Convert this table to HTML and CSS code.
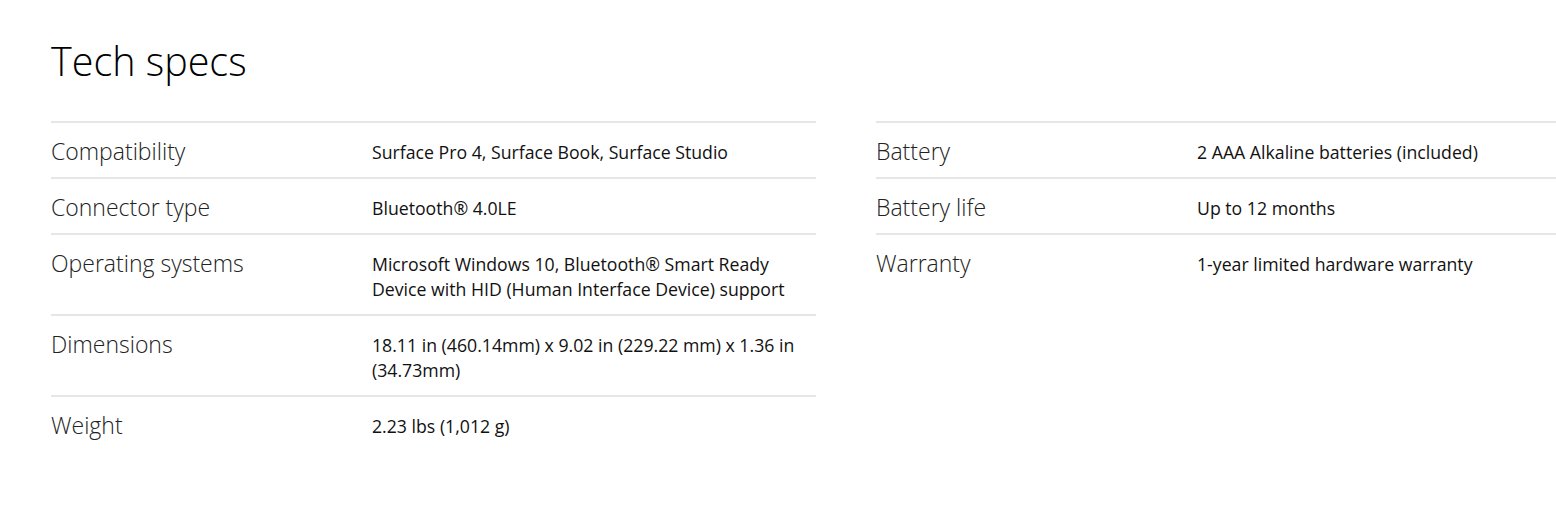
FILE: index.html
```html
<!DOCTYPE html>
<html lang="en">
<head>
<meta charset="utf-8">
<title>Tech specs</title>
<link rel="stylesheet" href="styles.css">
</head>
<body>
<main class="page">
  <h1 class="title">Tech specs</h1>
  <div class="specs">
    <dl class="spec-table">
      <div class="spec-row">
        <dt class="spec-label">Compatibility</dt>
        <dd class="spec-value">Surface Pro 4, Surface Book, Surface Studio</dd>
      </div>
      <div class="spec-row">
        <dt class="spec-label">Connector type</dt>
        <dd class="spec-value">Bluetooth® 4.0LE</dd>
      </div>
      <div class="spec-row">
        <dt class="spec-label">Operating systems</dt>
        <dd class="spec-value">Microsoft Windows 10, Bluetooth® Smart Ready Device with HID (Human Interface Device) support</dd>
      </div>
      <div class="spec-row">
        <dt class="spec-label">Dimensions</dt>
        <dd class="spec-value">18.11 in (460.14mm) x 9.02 in (229.22 mm) x 1.36 in (34.73mm)</dd>
      </div>
      <div class="spec-row">
        <dt class="spec-label">Weight</dt>
        <dd class="spec-value">2.23 lbs (1,012 g)</dd>
      </div>
    </dl>
    <dl class="spec-table">
      <div class="spec-row">
        <dt class="spec-label">Battery</dt>
        <dd class="spec-value">2 AAA Alkaline batteries (included)</dd>
      </div>
      <div class="spec-row">
        <dt class="spec-label">Battery life</dt>
        <dd class="spec-value">Up to 12 months</dd>
      </div>
      <div class="spec-row">
        <dt class="spec-label">Warranty</dt>
        <dd class="spec-value">1-year limited hardware warranty</dd>
      </div>
    </dl>
  </div>
</main>
</body>
</html>
```
FILE: styles.css
```css
html, body {
  margin: 0;
  padding: 0;
  background: #ffffff;
}

body {
  font-family: "Open Sans", "Noto Sans", sans-serif;
  color: #000000;
}

.page {
  padding: 0 0 0 51px;
}

.title {
  margin: 0;
  padding-top: 34px;
  height: 121px;
  box-sizing: border-box;
  font-size: 39.5px;
  line-height: 54px;
  font-weight: 300;
  color: #000000;
}

.specs {
  display: grid;
  grid-template-columns: 765px 1fr;
  column-gap: 60px;
  align-items: start;
}

.spec-table {
  margin: 0;
  border-top: 2px solid #e6e6e6;
}

.spec-row {
  display: grid;
  grid-template-columns: 321px 1fr;
  padding: 16px 0 12px;
  border-bottom: 2px solid #e6e6e6;
}

.spec-row:last-child {
  border-bottom: none;
}

.spec-label {
  margin: 0;
  font-size: 23px;
  line-height: 25px;
  font-weight: 300;
  color: #222222;
}

.spec-value {
  margin: 0;
  padding-top: 1px;
  font-size: 17.7px;
  line-height: 25px;
  font-weight: 400;
  color: #111111;
  padding-right: 20px;
}
```
